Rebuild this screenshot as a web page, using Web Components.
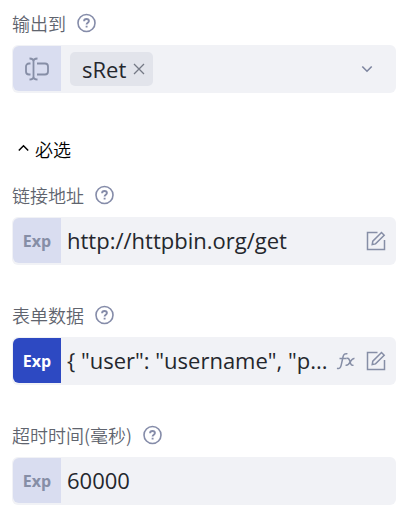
<!DOCTYPE html>
<html lang="zh-CN">
<head>
<meta charset="utf-8">
<meta name="viewport" content="width=device-width, initial-scale=1">
<title>参数</title>
<style>
  body {
    margin: 0;
    background: #fff;
    font-family: "Open Sans", "Noto Sans CJK SC", sans-serif;
    --muted: #868ea6;
    --field: #f1f2f6;
    --prefix: #d9ddf0;
    --ink: #24272d;
  }
</style>
</head>
<body>
<param-panel>
  <param-select label="输出到" tag="sRet"></param-select>
  <param-group label="必选">
    <param-field label="链接地址" value="http://httpbin.org/get" actions="edit"></param-field>
    <param-field label="表单数据" value='{ "user": "username", "p...' actions="fx edit" active></param-field>
    <param-field label="超时时间(毫秒)" value="60000" actions=""></param-field>
  </param-group>
</param-panel>

<script>
const reset = `
  * { box-sizing: border-box; }
  button { border: 0; padding: 0; margin: 0; background: none; color: inherit; font: inherit; cursor: pointer; display: grid; place-items: center; }
  svg { display: block; fill: none; stroke: currentColor; }
`;
const fieldStyle = reset + `
  :host { display: flex; flex-direction: column; gap: 10px; }
  .head { display: flex; align-items: center; gap: 11px; height: 24px; }
  label { font: 350 18px/24px "Noto Sans CJK SC", "Noto Sans", sans-serif; color: #60646e; }
  .box { display: flex; align-items: center; height: 48px; padding: 1px 10px 2px 1px; border-radius: 6px; background: var(--field); }
  .prefix { flex: none; width: 48px; height: 100%; border-radius: 6px 0 0 6px; background: var(--prefix); color: var(--muted); font-weight: 700; font-size: 16px; line-height: 22px; }
`;

class HelpButton extends HTMLElement {
  connectedCallback() {
    this.attachShadow({ mode: "open" }).innerHTML = `
      <style>${reset} :host { display: block; color: #858ca9; }</style>
      <button type="button" aria-label="帮助">
        <svg width="20" height="20" viewBox="0 0 20 20" stroke-width="1.6">
          <circle cx="9.5" cy="10" r="8.5"/>
          <path stroke-width="1.9" d="M7.1 8.2C7.1 6.700 8.100 6 9.500 6s2.400.800 2.400 2.100c0 1.600-2.300 1.700-2.300 3.400M9.600 12.800v1.800"/>
        </svg>
      </button>`;
  }
}

class ParamPanel extends HTMLElement {
  connectedCallback() {
    this.attachShadow({ mode: "open" }).innerHTML = `
      <style>:host { display: flex; flex-direction: column; gap: 44px; padding: 11px 15px 19px 12px; }</style>
      <slot></slot>`;
  }
}

class ParamGroup extends HTMLElement {
  connectedCallback() {
    this.attachShadow({ mode: "open" }).innerHTML = `
      <style>${reset}
        :host { display: flex; flex-direction: column; gap: 22px; }
        button { display: flex; align-items: center; gap: 6px; height: 24px; padding-left: 6px; color: #000; align-self: flex-start; font: 350 18px/24px "Noto Sans CJK SC", sans-serif; }
        .items { display: flex; flex-direction: column; gap: 38px; }
        .items[hidden] { display: none; }
      </style>
      <button type="button" aria-expanded="true">
        <svg width="11" height="12" viewBox="0 0 11 12" stroke-width="1.5"><path d="M.8 7.5 5.5 2.8l4.7 4.7"/></svg>
        <span>${this.getAttribute("label")}</span>
      </button>
      <div class="items"><slot></slot></div>`;
    const root = this.shadowRoot;
    root.querySelector("button").addEventListener("click", e => {
      const items = root.querySelector(".items");
      items.hidden = !items.hidden;
      e.currentTarget.setAttribute("aria-expanded", String(!items.hidden));
    });
  }
}

class ParamSelect extends HTMLElement {
  connectedCallback() {
    this.attachShadow({ mode: "open" }).innerHTML = `
      <style>${fieldStyle}
        .tag { flex: none; display: flex; align-items: center; gap: 7px; height: 34px; margin-left: 9px; padding: 0 8px 0 12px; border-radius: 5px; background: #e2e4eb; color: var(--ink); font-size: 22px; line-height: 34px; }
        .tag button { color: #747985; }
        .pick { flex: 1; min-width: 0; display: grid; align-items: center; height: 100%; }
        .pick > * { grid-area: 1 / 1; }
        select { appearance: none; width: 100%; height: 100%; border: 0; outline: 0; background: none; font: inherit; }
        .pick svg { justify-self: end; margin-right: 13px; color: #7d859f; pointer-events: none; }
      </style>
      <div class="head"><label for="pick">${this.getAttribute("label")}</label><help-button></help-button></div>
      <div class="box">
        <button type="button" class="prefix" aria-label="变量">
          <svg width="24" height="24" viewBox="0 0 24 24" stroke-width="1.8">
            <path d="M4.500 1.500C6.800 1.500 8.500 2.500 8.500 4.500v15c0 2-1.700 3-4 3M12.500 1.500c-2.300 0-4 1-4 3M8.500 19.500c0 2 1.700 3 4 3"/>
            <path d="M5.500 6.500H4a3 3 0 0 0-3 3v5a3 3 0 0 0 3 3h1.500M12 6.500h8a3 3 0 0 1 3 3v5a3 3 0 0 1-3 3h-8"/>
          </svg>
        </button>
        <span class="tag"><span>${this.getAttribute("tag")}</span>
          <button type="button" aria-label="移除"><svg width="12" height="12" viewBox="0 0 12 12" stroke-width="1.3"><path d="m1 1 10 10M11 1 1 11"/></svg></button>
        </span>
        <div class="pick">
          <select id="pick"><option value="" selected></option></select>
          <svg width="12" height="8" viewBox="0 0 12 8" stroke-width="1.6"><path d="m1.300 1.500 4.700 4.700 4.700-4.700"/></svg>
        </div>
      </div>`;
  }
}

const actionButtons = {
  fx: `<button type="button" aria-label="函数"><svg width="20" height="18" viewBox="0 0 20 18" stroke-width="1.500">
      <path d="M1 16.300c2.400.800 3.600-.500 4.200-3.100l1.900-8.700C7.600 2.200 9 1.200 11.400 1.800M3.500 6.500h7"/>
      <path d="M10.500 6.500c1.500-.600 2.400.100 2.900 1.600l1.300 3.700c.500 1.400 1.400 1.800 2.800 1.300M18.500 6.500c-1.600-.300-2.700.700-4.100 3.200-1.500 2.700-2.900 4-4.900 3.400"/></svg></button>`,
  edit: `<button type="button" aria-label="编辑"><svg width="20" height="20" viewBox="0 0 20 20" stroke-width="1.500">
      <path d="M11.500 1.500h-10v17h17V9"/>
      <path d="m6.200 13.600.600-3.400 8.700-8.700 2.700 2.700-8.700 8.700-3.300.700Z"/></svg></button>`
};

class ParamField extends HTMLElement {
  connectedCallback() {
    const actions = this.getAttribute("actions").split(" ").filter(Boolean).map(a => actionButtons[a]).join("");
    this.attachShadow({ mode: "open" }).innerHTML = `
      <style>${fieldStyle}
        :host([active]) .prefix { background: #2d49c2; color: #fff; }
        input { flex: 1; min-width: 0; height: 100%; margin: 0 4px 0 6px; padding: 0 0 2px; border: 0; outline: 0; background: none; color: var(--ink); font: 400 22px/30px "Open Sans", sans-serif; text-overflow: ellipsis; }
        .actions { flex: none; display: flex; align-items: center; gap: 10px; color: var(--muted); }
      </style>
      <div class="head"><label for="value">${this.getAttribute("label")}</label><help-button></help-button></div>
      <div class="box">
        <button type="button" class="prefix">Exp</button>
        <input id="value" type="text">
        <div class="actions">${actions}</div>
      </div>`;
    this.shadowRoot.querySelector("input").value = this.getAttribute("value");
  }
}

customElements.define("help-button", HelpButton);
customElements.define("param-panel", ParamPanel);
customElements.define("param-group", ParamGroup);
customElements.define("param-select", ParamSelect);
customElements.define("param-field", ParamField);
</script>
</body>
</html>
